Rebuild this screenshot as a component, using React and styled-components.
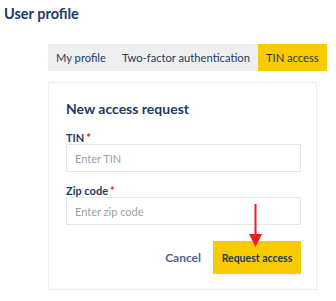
import React from "react";
import styled, { createGlobalStyle } from "styled-components";

const Global = createGlobalStyle`
  body {
    margin: 0;
    background: #ffffff;
    font-family: "Lato", "Noto Sans", sans-serif;
    color: #1d3b63;
  }
`;

const Page = styled.div`
  width: 336px;
  height: 301px;
  box-sizing: border-box;
  padding: 4px 0 0 4px;
  position: relative;
  overflow: hidden;
`;

const Title = styled.h1`
  margin: 0;
  font-size: 14.5px;
  font-weight: 700;
  line-height: 20px;
  color: #1d3b63;
`;

const Tabs = styled.div`
  display: flex;
  margin: 20px 0 0 44px;
  width: max-content;
  height: 27px;
  background: #efefef;
`;

const Tab = styled.div`
  display: flex;
  align-items: center;
  white-space: nowrap;
  padding: 0 8px;
  font-size: 11.2px;
  color: #1d3b63;
  background: ${(p) => (p.$active ? "#f8ca00" : "transparent")};
`;

const Card = styled.div`
  margin: 11px 0 0 44px;
  width: 269px;
  height: 208px;
  box-sizing: border-box;
  border: 1px solid #eeeeee;
  padding: 17px 15px 0 17px;
`;

const Heading = styled.h2`
  margin: 0 0 14px;
  font-size: 14px;
  font-weight: 700;
  line-height: 18px;
  color: #1d3b63;
`;

const Label = styled.div`
  font-size: 11px;
  font-weight: 700;
  line-height: 12px;
  span {
    color: #e0242a;
    margin-left: 2px;
  }
`;

const Field = styled.div`
  height: 28px;
  box-sizing: border-box;
  border: 1px solid #e6e6e6;
  display: flex;
  align-items: center;
  padding-left: 8px;
  font-size: 11px;
  color: #9a9fa6;
  margin-bottom: ${(p) => p.$gap || 0}px;
`;

const Actions = styled.div`
  display: flex;
  justify-content: flex-end;
  align-items: center;
  gap: 12px;
  margin-top: 16px;
`;

const Cancel = styled.button`
  border: none;
  background: none;
  padding: 0;
  font-family: inherit;
  font-size: 12px;
  font-weight: 700;
  color: #4a6685;
`;

const Primary = styled.button`
  border: none;
  background: #f8ca00;
  width: 88px;
  height: 33px;
  font-family: inherit;
  font-size: 10.5px;
  font-weight: 700;
  color: #1d3b63;
  padding: 0;
`;

const Arrow = styled.svg`
  position: absolute;
  left: 248px;
  top: 204px;
`;

export default function App() {
  return (
    <Page>
      <Global />
      <Title>User profile</Title>
      <Tabs>
        <Tab>My profile</Tab>
        <Tab>Two-factor authentication</Tab>
        <Tab $active>TIN access</Tab>
      </Tabs>
      <Card>
        <Heading>New access request</Heading>
        <Label>
          TIN<span>*</span>
        </Label>
        <Field $gap={13}>Enter TIN</Field>
        <Label>
          Zip code<span>*</span>
        </Label>
        <Field>Enter zip code</Field>
        <Actions>
          <Cancel>Cancel</Cancel>
          <Primary>Request access</Primary>
        </Actions>
      </Card>
      <Arrow width="15" height="44" viewBox="0 0 15 44">
        <line x1="7.5" y1="0" x2="7.5" y2="32" stroke="#ee1c1c" strokeWidth="2" />
        <polygon points="1,30 14,30 7.5,43" fill="#ee1c1c" />
      </Arrow>
    </Page>
  );
}
